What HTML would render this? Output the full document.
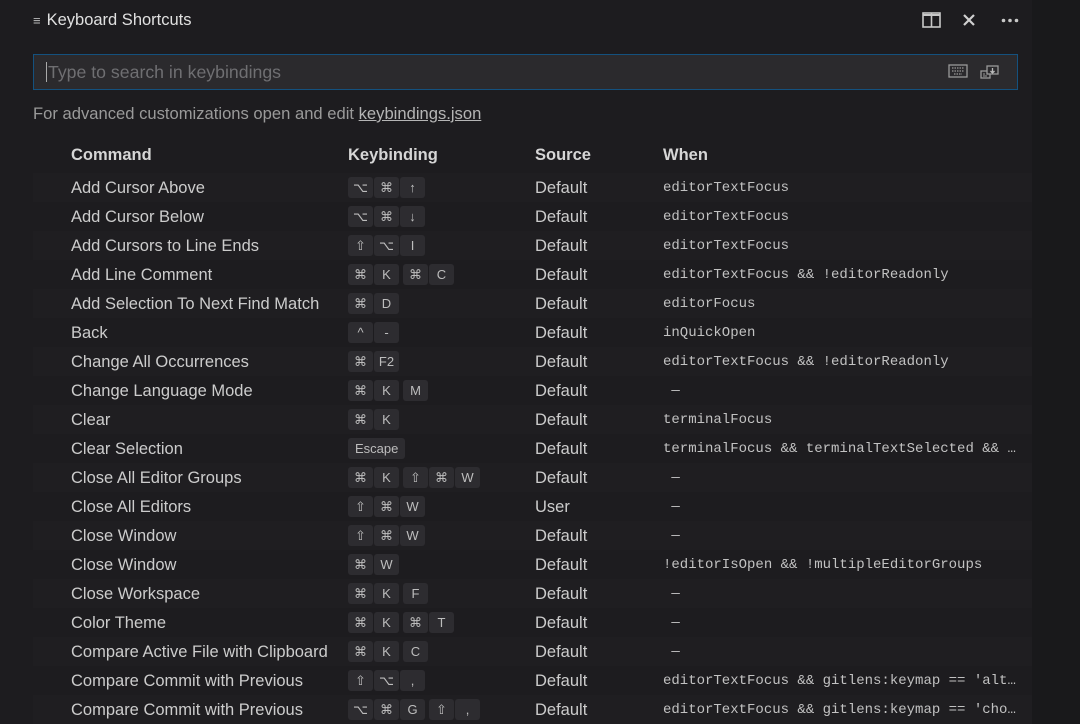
<!DOCTYPE html>
<html><head><meta charset="utf-8"><style>
body{margin:0;width:1080px;height:724px;overflow:hidden;background:#1d1c1f;font-family:"Liberation Sans",sans-serif;color:#cccccc;position:relative}
.strip{position:absolute;left:1032px;top:0;width:48px;height:724px;background:#19191b}
.title{position:absolute;left:33px;top:11px;font-size:16.5px;color:#e0e0e0}
.title span{font-size:13px;margin-right:6px;color:#bbb}
.search{position:absolute;left:33px;top:54px;width:983px;height:34px;border:1px solid #14517e;background:#2b2a2d;box-sizing:content-box}
.search .ph{position:absolute;left:12px;top:7px;font-size:17.7px;color:#6f6f72;border-left:1px solid #aaa;padding-left:1px;line-height:20px}
.help{position:absolute;left:33px;top:104px;font-size:16.6px;color:#9a9a9a}
.help u{color:#b5b5b5}
.hdr{position:absolute;top:146px;font-size:16.5px;font-weight:bold;color:#d6d6d6}
.row{position:absolute;left:33px;width:999px;height:29px;font-size:16.5px}
.row.alt{background:#1f1e21}
.row div{position:absolute;top:6px;white-space:nowrap}
.c1{left:38px}.c3{left:502px}
.c4{left:630px;font-family:"Liberation Mono",monospace;font-size:14px;color:#c2c2c2;top:7px!important}
.kb{left:315px;top:4px!important;display:flex;gap:1px}
.k{background:#2d2c30;height:21px;line-height:21px;font-size:13px;min-width:25px;text-align:center;border-radius:3px;padding:0 1px;box-sizing:border-box;color:#bdbdbd}
.k.w{padding:0 7px}
.gap{width:2px}
</style></head><body>
<div class="strip"></div>
<div class="title"><span>&#8801;</span>Keyboard Shortcuts</div>
<svg style="position:absolute;left:922px;top:12px" width="19" height="16"><rect x="1" y="1" width="17" height="14" fill="none" stroke="#c8c8c8" stroke-width="1.6"/><line x1="9.5" y1="1" x2="9.5" y2="15" stroke="#c8c8c8" stroke-width="1.6"/><line x1="1" y1="3" x2="18" y2="3" stroke="#c8c8c8" stroke-width="2"/></svg>
<svg style="position:absolute;left:962px;top:13px" width="14" height="14"><path d="M2 2L12 12M12 2L2 12" stroke="#d0d0d0" stroke-width="2.2"/></svg>
<svg style="position:absolute;left:1001px;top:18px" width="18" height="5"><circle cx="2.5" cy="2.5" r="1.8" fill="#c8c8c8"/><circle cx="9" cy="2.5" r="1.8" fill="#c8c8c8"/><circle cx="15.5" cy="2.5" r="1.8" fill="#c8c8c8"/></svg>
<div class="search"><div class="ph">Type to search in keybindings</div>
<svg style="position:absolute;left:914px;top:9px" width="20" height="14"><rect x="1" y="1" width="18" height="12" fill="none" stroke="#999" stroke-width="1.3"/><path d="M4 4h12M4 7h12M6 10h8" stroke="#999" stroke-width="1.2" stroke-dasharray="1.5 1"/></svg>
<svg style="position:absolute;left:946px;top:9px" width="20" height="16"><rect x="1" y="7" width="9" height="7" fill="none" stroke="#999" stroke-width="1.3"/><rect x="7" y="2" width="11" height="8" fill="#2b2a2d" stroke="#999" stroke-width="1.3"/><path d="M12.5 4v5M10.5 7l2 2 2-2" stroke="#bbb" stroke-width="1.3" fill="none"/><path d="M3 10h2M3 12h4" stroke="#999"/></svg>
</div>
<div class="help">For advanced customizations open and edit <u>keybindings.json</u></div>
<div class="hdr" style="left:71px">Command</div>
<div class="hdr" style="left:348px">Keybinding</div>
<div class="hdr" style="left:535px">Source</div>
<div class="hdr" style="left:663px">When</div>

<div class="row alt" style="top:173px"><div class="c1">Add Cursor Above</div><div class="kb"><span class="k">⌥</span><span class="k">⌘</span><span class="k">↑</span></div><div class="c3">Default</div><div class="c4">editorTextFocus</div></div>
<div class="row" style="top:202px"><div class="c1">Add Cursor Below</div><div class="kb"><span class="k">⌥</span><span class="k">⌘</span><span class="k">↓</span></div><div class="c3">Default</div><div class="c4">editorTextFocus</div></div>
<div class="row alt" style="top:231px"><div class="c1">Add Cursors to Line Ends</div><div class="kb"><span class="k">⇧</span><span class="k">⌥</span><span class="k">I</span></div><div class="c3">Default</div><div class="c4">editorTextFocus</div></div>
<div class="row" style="top:260px"><div class="c1">Add Line Comment</div><div class="kb"><span class="k">⌘</span><span class="k">K</span><span class="gap"></span><span class="k">⌘</span><span class="k">C</span></div><div class="c3">Default</div><div class="c4">editorTextFocus &amp;&amp; !editorReadonly</div></div>
<div class="row alt" style="top:289px"><div class="c1">Add Selection To Next Find Match</div><div class="kb"><span class="k">⌘</span><span class="k">D</span></div><div class="c3">Default</div><div class="c4">editorFocus</div></div>
<div class="row" style="top:318px"><div class="c1">Back</div><div class="kb"><span class="k">^</span><span class="k">-</span></div><div class="c3">Default</div><div class="c4">inQuickOpen</div></div>
<div class="row alt" style="top:347px"><div class="c1">Change All Occurrences</div><div class="kb"><span class="k">⌘</span><span class="k">F2</span></div><div class="c3">Default</div><div class="c4">editorTextFocus &amp;&amp; !editorReadonly</div></div>
<div class="row" style="top:376px"><div class="c1">Change Language Mode</div><div class="kb"><span class="k">⌘</span><span class="k">K</span><span class="gap"></span><span class="k">M</span></div><div class="c3">Default</div><div class="c4">&nbsp;—</div></div>
<div class="row alt" style="top:405px"><div class="c1">Clear</div><div class="kb"><span class="k">⌘</span><span class="k">K</span></div><div class="c3">Default</div><div class="c4">terminalFocus</div></div>
<div class="row" style="top:434px"><div class="c1">Clear Selection</div><div class="kb"><span class="k w">Escape</span></div><div class="c3">Default</div><div class="c4">terminalFocus &amp;&amp; terminalTextSelected &amp;&amp; …</div></div>
<div class="row alt" style="top:463px"><div class="c1">Close All Editor Groups</div><div class="kb"><span class="k">⌘</span><span class="k">K</span><span class="gap"></span><span class="k">⇧</span><span class="k">⌘</span><span class="k">W</span></div><div class="c3">Default</div><div class="c4">&nbsp;—</div></div>
<div class="row" style="top:492px"><div class="c1">Close All Editors</div><div class="kb"><span class="k">⇧</span><span class="k">⌘</span><span class="k">W</span></div><div class="c3">User</div><div class="c4">&nbsp;—</div></div>
<div class="row alt" style="top:521px"><div class="c1">Close Window</div><div class="kb"><span class="k">⇧</span><span class="k">⌘</span><span class="k">W</span></div><div class="c3">Default</div><div class="c4">&nbsp;—</div></div>
<div class="row" style="top:550px"><div class="c1">Close Window</div><div class="kb"><span class="k">⌘</span><span class="k">W</span></div><div class="c3">Default</div><div class="c4">!editorIsOpen &amp;&amp; !multipleEditorGroups</div></div>
<div class="row alt" style="top:579px"><div class="c1">Close Workspace</div><div class="kb"><span class="k">⌘</span><span class="k">K</span><span class="gap"></span><span class="k">F</span></div><div class="c3">Default</div><div class="c4">&nbsp;—</div></div>
<div class="row" style="top:608px"><div class="c1">Color Theme</div><div class="kb"><span class="k">⌘</span><span class="k">K</span><span class="gap"></span><span class="k">⌘</span><span class="k">T</span></div><div class="c3">Default</div><div class="c4">&nbsp;—</div></div>
<div class="row alt" style="top:637px"><div class="c1">Compare Active File with Clipboard</div><div class="kb"><span class="k">⌘</span><span class="k">K</span><span class="gap"></span><span class="k">C</span></div><div class="c3">Default</div><div class="c4">&nbsp;—</div></div>
<div class="row" style="top:666px"><div class="c1">Compare Commit with Previous</div><div class="kb"><span class="k">⇧</span><span class="k">⌥</span><span class="k">,</span></div><div class="c3">Default</div><div class="c4">editorTextFocus &amp;&amp; gitlens:keymap == 'alt…</div></div>
<div class="row alt" style="top:695px"><div class="c1">Compare Commit with Previous</div><div class="kb"><span class="k">⌥</span><span class="k">⌘</span><span class="k">G</span><span class="gap"></span><span class="k">⇧</span><span class="k">,</span></div><div class="c3">Default</div><div class="c4">editorTextFocus &amp;&amp; gitlens:keymap == 'cho…</div></div>
</body></html>
